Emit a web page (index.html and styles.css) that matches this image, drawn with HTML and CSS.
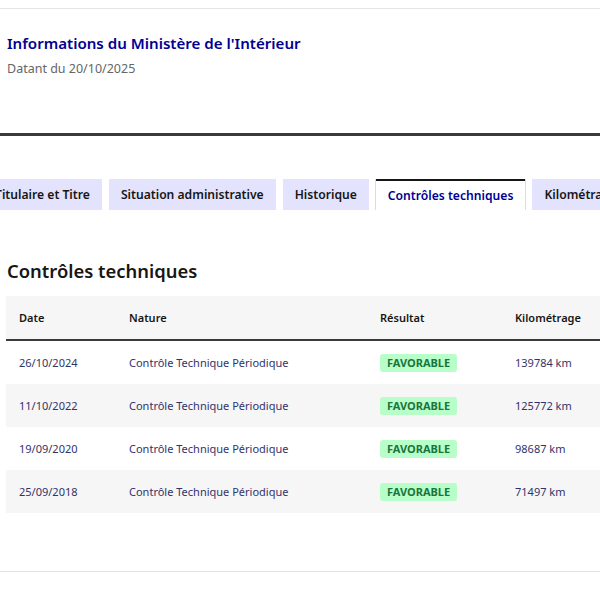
FILE: index.html
```html
<!DOCTYPE html>
<html lang="fr">
<head>
    <meta charset="UTF-8">
    <meta name="viewport" content="width=device-width, initial-scale=1.0">
    <title>Contrôles techniques</title>
    <link rel="stylesheet" href="styles.css">
</head>
<body>
    <div class="top-line"></div>

    <div class="source">
        <h2 class="source-title">Informations du Ministère de l'Intérieur</h2>
        <p class="source-date">Datant du 20/10/2025</p>
    </div>

    <div class="separator"></div>

    <div class="tabs">
        <ul class="tab-list">
            <li class="tab">Titulaire et Titre</li>
            <li class="tab">Situation administrative</li>
            <li class="tab">Historique</li>
            <li class="tab active">Contrôles techniques</li>
            <li class="tab">Kilométrage</li>
        </ul>
    </div>

    <div class="panel">
        <h3 class="panel-title">Contrôles techniques</h3>
        <table class="ct-table">
            <thead>
                <tr>
                    <th class="col-date">Date</th>
                    <th class="col-nature">Nature</th>
                    <th class="col-result">Résultat</th>
                    <th class="col-km">Kilométrage</th>
                </tr>
            </thead>
            <tbody>
                <tr>
                    <td>26/10/2024</td>
                    <td>Contrôle Technique Périodique</td>
                    <td><span class="badge">Favorable</span></td>
                    <td>139784 km</td>
                </tr>
                <tr>
                    <td>11/10/2022</td>
                    <td>Contrôle Technique Périodique</td>
                    <td><span class="badge">Favorable</span></td>
                    <td>125772 km</td>
                </tr>
                <tr>
                    <td>19/09/2020</td>
                    <td>Contrôle Technique Périodique</td>
                    <td><span class="badge">Favorable</span></td>
                    <td>98687 km</td>
                </tr>
                <tr>
                    <td>25/09/2018</td>
                    <td>Contrôle Technique Périodique</td>
                    <td><span class="badge">Favorable</span></td>
                    <td>71497 km</td>
                </tr>
            </tbody>
        </table>
    </div>

    <div class="bottom-line"></div>
</body>
</html>
```

FILE: styles.css
```css
body {
    margin: 0;
    font-family: 'Noto Sans', sans-serif;
    background-color: #fff;
    color: #161616;
    overflow: hidden;
}

.top-line {
    height: 1px;
    margin-top: 8px;
    background-color: #e6e6e6;
}

.source {
    padding: 23px 7px 0;
    height: 101px;
}

.source-title {
    margin: 0;
    font-size: 15.1px;
    line-height: 22px;
    font-weight: 600;
    color: #000091;
}

.source-date {
    margin: 6px 0 0;
    font-size: 12.5px;
    line-height: 18px;
    color: #666;
}

.separator {
    height: 3px;
    background-color: #3a3a3a;
}

.tabs {
    margin-top: 43px;
    overflow: hidden;
}

.tab-list {
    display: flex;
    gap: 7px;
    margin: 0 0 0 -17px;
    padding: 0;
    list-style: none;
    white-space: nowrap;
}

.tab {
    flex: none;
    padding: 0 12px;
    height: 31px;
    line-height: 31px;
    font-size: 12.15px;
    font-weight: 600;
    color: #161616;
    background-color: #e3e3fd;
}

.tab.active {
    background-color: #fff;
    color: #000091;
    border-top: 2px solid #161616;
    height: 29px;
    line-height: 29px;
    box-shadow: 1px 0 0 #ddd, -1px 0 0 #ddd;
}

.panel {
    padding: 48px 0 0 6px;
    height: 313px;
}

.panel-title {
    margin: 0 0 12px 1px;
    font-size: 18.4px;
    line-height: 26px;
    font-weight: 600;
    color: #161616;
}

.ct-table {
    border-collapse: collapse;
    width: 620px;
    font-size: 11px;
}

.ct-table th {
    text-align: left;
    font-weight: 600;
    height: 43px;
    padding: 0 13px;
    background-color: #f6f6f6;
    border-bottom: 2px solid #3a3a3a;
    color: #161616;
}

.ct-table td {
    height: 43px;
    padding: 0 13px;
    color: #33336a;
}

.ct-table tbody tr:nth-child(even) td {
    background-color: #f6f6f6;
}

.col-date { width: 84px; }
.col-nature { width: 225px; }
.col-result { width: 109px; }

.badge {
    display: inline-block;
    padding: 0 7px;
    line-height: 18px;
    border-radius: 3px;
    background-color: #b8fec9;
    color: #18753c;
    font-weight: 700;
    text-transform: uppercase;
}

.bottom-line {
    height: 1px;
    background-color: #e3e3e3;
}
```
